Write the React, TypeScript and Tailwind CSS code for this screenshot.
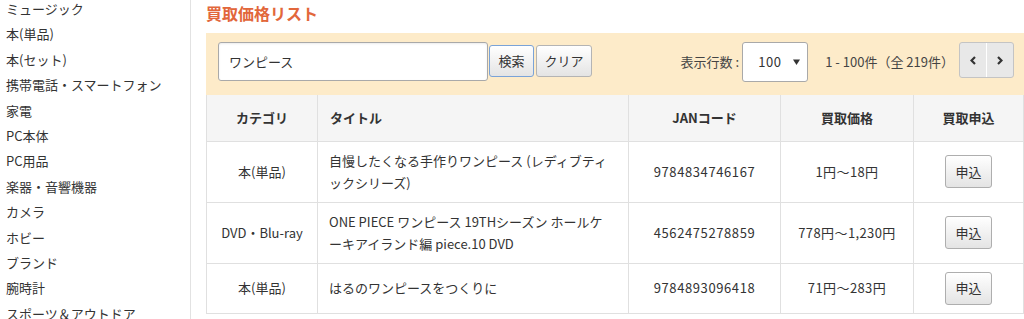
import React from "react";

const sideItems = [
  "ミュージック",
  "本(単品)",
  "本(セット)",
  "携帯電話・スマートフォン",
  "家電",
  "PC本体",
  "PC用品",
  "楽器・音響機器",
  "カメラ",
  "ホビー",
  "ブランド",
  "腕時計",
  "スポーツ＆アウトドア",
];

const rows = [
  {
    cat: "本(単品)",
    title: "自慢したくなる手作りワンピース (レディブティックシリーズ)",
    jan: "9784834746167",
    price: "1円～18円",
  },
  {
    cat: "DVD・Blu-ray",
    title: "ONE PIECE ワンピース 19THシーズン ホールケーキアイランド編 piece.10 DVD",
    jan: "4562475278859",
    price: "778円～1,230円",
  },
  {
    cat: "本(単品)",
    title: "はるのワンピースをつくりに",
    jan: "9784893096418",
    price: "71円～283円",
  },
];

function GrayButton({ children, className = "" }: { children: React.ReactNode; className?: string }) {
  return (
    <button
      className={
        "rounded-[3px] border bg-gradient-to-b from-white to-[#e4e4e4] text-[13px] text-[#333] " +
        className
      }
    >
      {children}
    </button>
  );
}

export default function App() {
  return (
    <div className="flex h-[319px] w-[1024px] overflow-hidden bg-white font-['Noto_Sans_CJK_JP',sans-serif] text-[13px] text-[#333]">
      <aside className="w-[191px] shrink-0 border-r border-[#e2e2e2]">
        <ul className="-mt-[4px] pl-[6px]">
          {sideItems.map((s) => (
            <li key={s} className="h-[25.4px] leading-[25.4px] whitespace-nowrap text-[13px] text-[#333]">
              {s}
            </li>
          ))}
        </ul>
      </aside>
      <main className="flex min-w-0 flex-1 flex-col pl-[15px]">
        <h2 className="h-[33px] pt-[1px] text-[16px] font-bold leading-[24px] text-[#e2673b]">買取価格リスト</h2>
        <div className="flex h-[62px] w-[818px] items-start bg-[#fdebc9] pl-[12px] pr-[10px] pt-[9px]">
          <div className="flex h-[39px] w-[270px] items-center rounded-[3px] border border-[#a9a9a9] bg-white pl-[10px] shadow-[inset_0_1px_2px_rgba(0,0,0,0.08)]">
            ワンピース
          </div>
          <GrayButton className="ml-[1px] mt-[3px] h-[32px] w-[45px] border-[#7aa3d8]">検索</GrayButton>
          <GrayButton className="ml-[2px] mt-[3px] h-[32px] w-[56px] border-[#b4b4b4]">クリア</GrayButton>
          <div className="ml-auto flex items-start">
            <span className="mt-[9px] leading-[22px] text-[#444]">
              表示行数<span className="ml-[3px]">:</span>
            </span>
            <div className="ml-[3px] flex h-[40px] w-[66px] items-center rounded-[3px] border border-[#a9a9a9] bg-white pl-[15px] pr-[7px]">
              <span className="tracking-[0.5px] text-[#333]">100</span>
              <svg className="ml-auto" width="7" height="6" viewBox="0 0 7 6">
                <path d="M0 0.5h7L3.5 6z" fill="#333" />
              </svg>
            </div>
            <span className="ml-[17px] mt-[9px] leading-[22px] text-[#444]">1 - 100件（全 219件）</span>
            <div className="ml-[5px] flex h-[36px] w-[55px] overflow-hidden rounded-[3px] border border-[#c4c4c4] bg-[#e8e8e8]">
              <div className="flex flex-1 items-center justify-center border-r border-white">
                <svg width="6" height="9" viewBox="0 0 6 9">
                  <path d="M5 1L1.5 4.5L5 8" stroke="#333" strokeWidth="2.2" fill="none" />
                </svg>
              </div>
              <div className="flex flex-1 items-center justify-center">
                <svg width="6" height="9" viewBox="0 0 6 9">
                  <path d="M1 1L4.5 4.5L1 8" stroke="#333" strokeWidth="2.2" fill="none" />
                </svg>
              </div>
            </div>
          </div>
        </div>
        <table className="w-[818px] table-fixed border-collapse text-[13px] text-[#333]">
          <colgroup>
            <col className="w-[111px]" />
            <col className="w-[311px]" />
            <col className="w-[152px]" />
            <col className="w-[133px]" />
            <col />
          </colgroup>
          <thead>
            <tr className="bg-[#f5f5f5]">
              <th className="h-[46px] border border-t-0 border-[#e0e0e0] text-center font-bold leading-[22px]">カテゴリ</th>
              <th className="border border-t-0 border-[#e0e0e0] pl-[12px] text-left font-bold leading-[22px]">タイトル</th>
              <th className="border border-t-0 border-[#e0e0e0] text-center font-bold leading-[22px]">JANコード</th>
              <th className="border border-t-0 border-[#e0e0e0] text-center font-bold leading-[22px]">買取価格</th>
              <th className="border border-t-0 border-[#e0e0e0] text-center font-bold leading-[22px]">買取申込</th>
            </tr>
          </thead>
          <tbody>
            {rows.map((r) => (
              <tr key={r.jan}>
                <td className="border border-[#e0e0e0] py-[8px] text-center leading-[22px]">{r.cat}</td>
                <td className="border border-[#e0e0e0] py-[8px] pl-[11px] pr-[14px] text-left leading-[22px]">{r.title}</td>
                <td className="border border-[#e0e0e0] py-[8px] text-center leading-[22px] tracking-[0.6px]">{r.jan}</td>
                <td className="border border-[#e0e0e0] py-[8px] text-center leading-[22px] tracking-[0.4px]">{r.price}</td>
                <td className="border border-[#e0e0e0] py-[8px] text-center leading-[22px]">
                  <GrayButton className="h-[33px] w-[47px] border-[#aeaeae] align-middle">申込</GrayButton>
                </td>
              </tr>
            ))}
          </tbody>
        </table>
      </main>
    </div>
  );
}
